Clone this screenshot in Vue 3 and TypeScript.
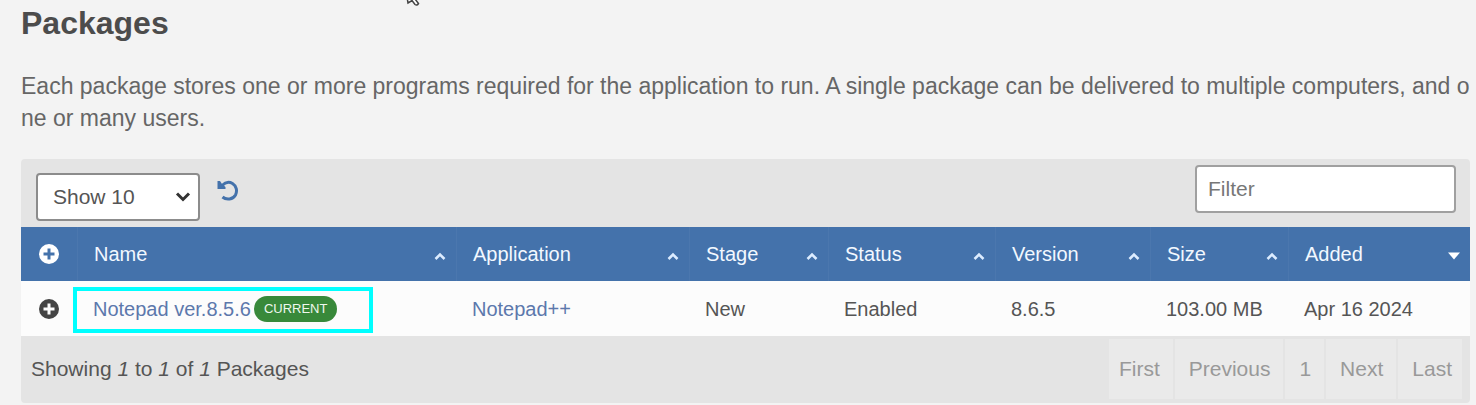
<script setup lang="ts">
import { ref } from 'vue'

interface Column {
  key: string
  label: string
  sorted?: boolean
}

const columns: Column[] = [
  { key: 'name', label: 'Name' },
  { key: 'application', label: 'Application' },
  { key: 'stage', label: 'Stage' },
  { key: 'status', label: 'Status' },
  { key: 'version', label: 'Version' },
  { key: 'size', label: 'Size' },
  { key: 'added', label: 'Added', sorted: true },
]

const packages = [
  {
    name: 'Notepad ver.8.5.6',
    current: true,
    application: 'Notepad++',
    stage: 'New',
    status: 'Enabled',
    version: '8.6.5',
    size: '103.00 MB',
    added: 'Apr 16 2024',
  },
]

const pages = ['First', 'Previous', '1', 'Next', 'Last']
const pageSize = ref('10')
const filter = ref('')
</script>

<template>
  <main class="page">
    <svg class="pointer" viewBox="0 0 16 8" aria-hidden="true">
      <path d="M1 -3 L2 3 L6 0.500 L9 4.500 Q11 6 12.500 3.500 L9 -1 L14 -1" />
    </svg>
    <h1>Packages</h1>
    <p class="intro">
      Each package stores one or more programs required for the application to run. A single package can be delivered to multiple computers, and one or many users.
    </p>

    <section class="panel">
      <div class="toolbar">
        <div class="length">
          <select v-model="pageSize" aria-label="Rows per page">
            <option value="10">Show 10</option>
            <option value="25">Show 25</option>
            <option value="50">Show 50</option>
          </select>
          <svg class="chevron" viewBox="0 0 16 12" aria-hidden="true"><path d="M2 2.500 L8 8.500 L14 2.500" /></svg>
        </div>
        <button class="reset" type="button" aria-label="Reset">
          <svg viewBox="0 0 22 22" aria-hidden="true">
            <path class="arc" d="M5 5.500 C8 2.500 12 1.500 15.500 3.500 C19.500 6 20.500 11 18.500 15 C16 19.500 9.500 20.500 5.500 17" />
            <path class="head" d="M0.500 1 L3 1 L5 4 L8.500 7 L8.500 9 L0.500 9 Z" />
          </svg>
        </button>
        <input v-model="filter" class="filter" type="text" placeholder="Filter" aria-label="Filter" />
      </div>

      <table>
        <colgroup>
          <col class="c-toggle" />
          <col v-for="c in columns" :key="c.key" :class="`c-${c.key}`" />
        </colgroup>
        <thead>
          <tr>
            <th class="toggle">
              <button type="button" aria-label="Expand all">
                <svg viewBox="0 0 20 20" aria-hidden="true"><path fill-rule="evenodd" d="M10 0A10 10 0 1 1 10 20A10 10 0 1 1 10 0ZM8.500 4.500V8.500H4.500V11.500H8.500V15.500H11.500V11.500H15.500V8.500H11.500V4.500Z" /></svg>
              </button>
            </th>
            <th v-for="c in columns" :key="c.key" scope="col">
              <div class="head-cell">
                <span>{{ c.label }}</span>
                <svg viewBox="0 0 12 8" aria-hidden="true">
                  <path v-if="c.sorted" class="solid" d="M0 0.500H12L6 7.500Z" />
                  <path v-else class="open" d="M1.500 7L6 2.500L10.500 7" />
                </svg>
              </div>
            </th>
          </tr>
        </thead>
        <tbody>
          <tr v-for="p in packages" :key="p.name">
            <td class="toggle">
              <button type="button" aria-label="Expand row">
                <svg viewBox="0 0 20 20" aria-hidden="true"><path fill-rule="evenodd" d="M10 0A10 10 0 1 1 10 20A10 10 0 1 1 10 0ZM8.500 4.500V8.500H4.500V11.500H8.500V15.500H11.500V11.500H15.500V8.500H11.500V4.500Z" /></svg>
              </button>
            </td>
            <td class="name">
              <div class="name-cell">
                <a href="#">{{ p.name }}</a>
                <span v-if="p.current" class="badge">CURRENT</span>
              </div>
              <span class="highlight"></span>
            </td>
            <td><a href="#">{{ p.application }}</a></td>
            <td>{{ p.stage }}</td>
            <td>{{ p.status }}</td>
            <td>{{ p.version }}</td>
            <td>{{ p.size }}</td>
            <td>{{ p.added }}</td>
          </tr>
        </tbody>
      </table>

      <footer class="footer">
        <span>Showing <em>1</em> to <em>1</em> of <em>1</em> Packages</span>
        <nav aria-label="Pagination">
          <button v-for="label in pages" :key="label" type="button">{{ label }}</button>
        </nav>
      </footer>
    </section>
  </main>
</template>

<style>
body {
  background: #f3f3f3;
}
</style>

<style scoped>
.page {
  position: relative;
  padding: 4px 0 3px 21px;
  font-family: "Liberation Sans", Arial, sans-serif;
  color: #555;
}
.panel {
  margin-right: 6px;
}
.pointer {
  position: absolute;
  left: 406px;
  top: 0;
  width: 16px;
  height: 8px;
  fill: #fff;
  stroke: #444;
  stroke-width: 1.500;
}
h1 {
  margin: 0;
  font-size: 32px;
  line-height: 38px;
  color: #4c4c4c;
}
.intro {
  margin: 28px 0 25px;
  font-size: 23px;
  line-height: 32px;
  color: #666;
  word-break: break-all;
}
.toolbar {
  display: flex;
  align-items: flex-start;
  padding: 6px 14px 0 15px;
  height: 62px;
  background: #e4e4e4;
  border-radius: 4px 4px 0 0;
}
.length {
  position: relative;
  margin-top: 8px;
}
select,
.filter {
  box-sizing: border-box;
  height: 48px;
  border: 2px solid #8c8c8c;
  border-radius: 4px;
  background: #fff;
  font: 21px/28px "Liberation Sans", Arial, sans-serif;
  color: #555;
}
select {
  display: block;
  appearance: none;
  width: 164px;
  padding: 0 32px 0 15px;
}
.chevron {
  position: absolute;
  right: 9px;
  top: 18px;
  width: 16px;
  height: 12px;
  fill: none;
  stroke: #333;
  stroke-width: 3;
  pointer-events: none;
}
button {
  border: 0;
  padding: 0;
  background: none;
  font: inherit;
  color: inherit;
  cursor: pointer;
}
.reset {
  margin: 15px auto 0 17px;
  color: #4472ab;
}
.reset svg {
  display: block;
  width: 22px;
  height: 22px;
}
.arc {
  fill: none;
  stroke: currentColor;
  stroke-width: 3;
}
.head {
  fill: currentColor;
}
.filter {
  width: 261px;
  padding: 0 11px;
  border-color: #a0a0a0;
}
.filter::placeholder {
  color: #777;
}
table {
  width: 100%;
  table-layout: fixed;
  border-collapse: separate;
  border-spacing: 0;
  font-size: 20px;
  line-height: 24px;
}
.c-toggle { width: 56px; }
.c-name { width: 379px; }
.c-application { width: 233px; }
.c-stage { width: 139px; }
.c-status { width: 167px; }
.c-version { width: 155px; }
.c-size { width: 138px; }
.c-added { width: 182px; }
th {
  height: 54px;
  padding: 0 10px 0 16px;
  background: #4472ab;
  border-left: 1px solid #4b77ae;
  color: #f2f8ff;
  font-weight: 400;
  text-align: left;
}
td {
  height: 55px;
  padding: 0 0 0 16px;
  background: #fcfcfc;
  white-space: nowrap;
}
th.toggle,
td.toggle {
  padding: 0;
  border-left: 0;
}
.toggle button {
  display: block;
  width: 20px;
  height: 20px;
  margin-left: 18px;
}
.toggle svg {
  display: block;
  width: 20px;
  height: 20px;
  fill: #fff;
}
td.toggle svg {
  fill: #444;
}
.head-cell {
  display: flex;
  align-items: center;
  justify-content: space-between;
}
.head-cell svg {
  width: 12px;
  height: 8px;
  margin-top: 4px;
}
.solid {
  fill: #fff;
}
.open {
  fill: none;
  stroke: #dcecff;
  stroke-width: 2.500;
}
a {
  color: #5c78ac;
  text-decoration: none;
}
.name {
  position: relative;
}
.name-cell {
  display: flex;
  align-items: center;
  gap: 3px;
}
.badge {
  padding: 0 10px;
  border-radius: 13px;
  background: #38893a;
  color: #eef8ee;
  font-size: 13px;
  line-height: 26px;
}
.highlight {
  position: absolute;
  left: -4px;
  top: 6px;
  box-sizing: border-box;
  width: 300px;
  height: 46px;
  border: 4px solid #00ffff;
  pointer-events: none;
}
.footer {
  display: flex;
  align-items: center;
  justify-content: space-between;
  padding: 3px 8px 4px 10px;
  background: #e4e4e4;
  border-radius: 0 0 4px 4px;
  font-size: 21px;
  line-height: 60px;
}
nav {
  display: flex;
}
nav button {
  padding: 0 13px 0 14px;
  border-left: 2px solid #e4e4e4;
  background: #eaeaea;
  color: #999;
}
nav button:first-child {
  padding-left: 10px;
}
nav button:last-child {
  padding-right: 10px;
}
</style>
